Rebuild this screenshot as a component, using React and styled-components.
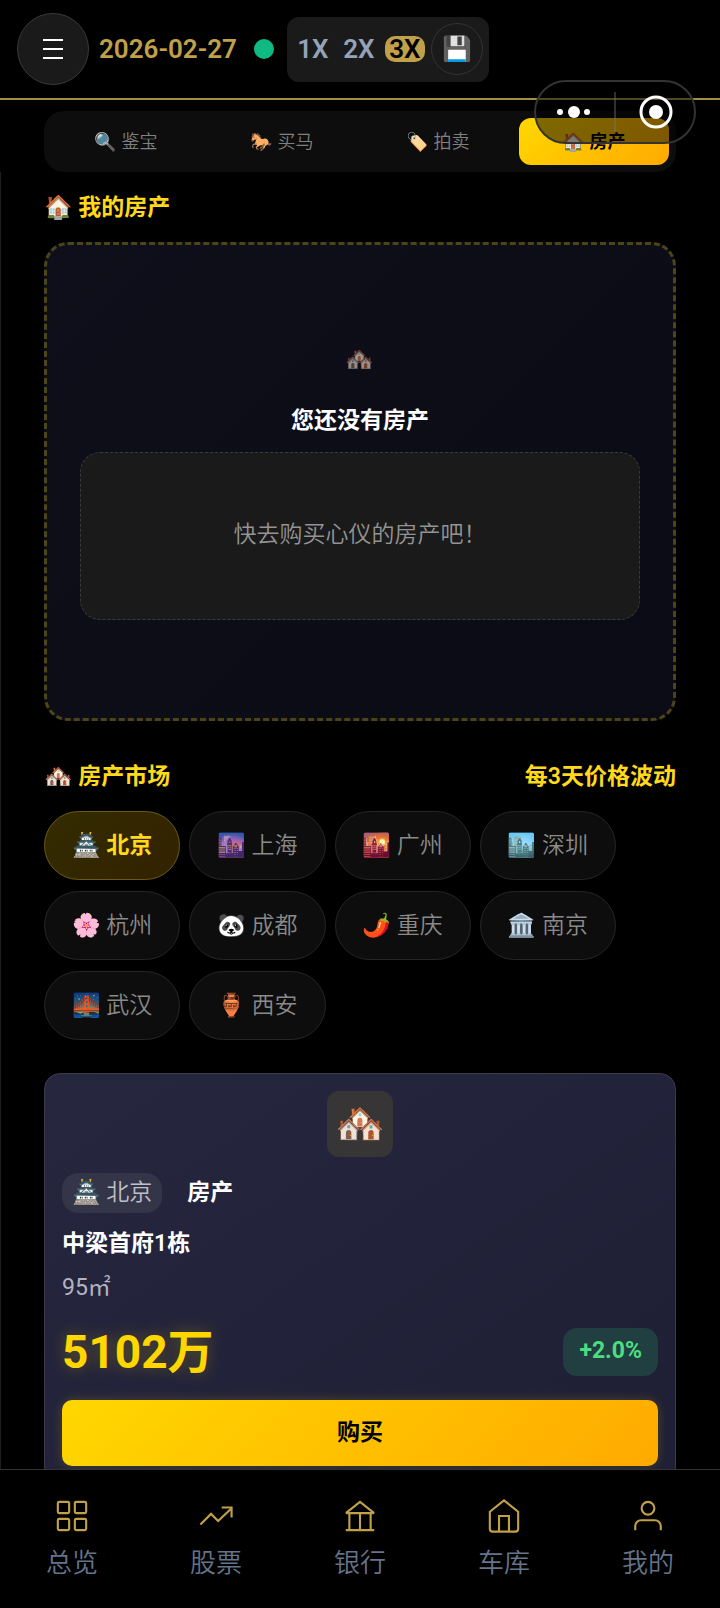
import styled, { createGlobalStyle, css } from "styled-components";
import { useState } from "react";

const GlobalStyle = createGlobalStyle`
  * {
    box-sizing: border-box;
  }

  body {
    margin: 0;
    background-color: #000;
    color: #fff;
    font-family: Roboto, "Noto Sans CJK SC", "Noto Color Emoji", sans-serif;
    font-size: 23px;
    font-weight: 350;
    line-height: 34px;
  }

  button {
    font-family: inherit;
    font-size: inherit;
    font-weight: inherit;
    line-height: inherit;
    color: inherit;
    padding: 0;
    border: none;
    background: none;
    cursor: pointer;
  }

  h2, h3, p {
    margin: 0;
    font-size: inherit;
  }
`;

const Container = styled.div`
  height: 100vh;
  display: flex;
  flex-direction: column;
  overflow: hidden;
`;

const Header = styled.header`
  flex: none;
  display: flex;
  align-items: center;
  height: 100px;
  padding: 0 17px;
  border-bottom: 2px solid #a39043;
`;

const MenuButton = styled.button`
  display: flex;
  align-items: center;
  justify-content: center;
  width: 72px;
  height: 72px;
  border: 1px solid #3a3a3a;
  border-radius: 50%;
  background-color: #1a1a1a;
`;

const DateText = styled.time`
  margin-left: 10px;
  color: #c0a048;
  font-size: 26px;
  font-weight: 600;
`;

const StatusDot = styled.span`
  width: 20px;
  height: 20px;
  margin: 0 13px 0 17px;
  border-radius: 50%;
  background-color: #10b981;
`;

const SpeedGroup = styled.div`
  display: flex;
  align-items: center;
  height: 65px;
  padding: 0 6px;
  border-radius: 12px;
  background-color: #1a1a1a;
`;

const SpeedButton = styled.button`
  margin-right: 6px;
  width: 40px;
  border-radius: 10px;
  color: ${(props) => (props.$active ? "#000" : "#94a3b8")};
  background-color: ${(props) => (props.$active ? "#c0a048" : "transparent")};
  font-size: 26px;
  font-weight: 600;
  line-height: 26px;
`;

const SaveButton = styled.button`
  width: 52px;
  height: 52px;
  border: 1px solid #333;
  border-radius: 50%;
  font-size: 24px;
`;

// floating pill of the host app, lies over the header and the tabs
const Capsule = styled.div`
  position: absolute;
  top: 80px;
  right: 24px;
  z-index: 5;
  display: flex;
  align-items: center;
  width: 162px;
  height: 64px;
  border: 2px solid #333;
  border-radius: 32px;
  background-color: rgba(0, 0, 0, 0.5);
`;

const CapsuleButton = styled.button`
  flex: 1;
  height: 40px;
  display: flex;
  align-items: center;
  justify-content: center;

  & + & {
    border-left: 2px solid rgba(120, 120, 120, 0.4);
  }
`;

const Main = styled.main`
  flex: 1;
  min-height: 0;
  overflow: hidden;
  padding-top: 11px;
`;

const Tabs = styled.nav`
  display: flex;
  gap: 6px;
  margin: 0 44px;
  padding: 7px;
  border-radius: 20px;
  background-color: #0d0d0d;
`;

const Panel = styled.div`
  padding: 19px 44px 0 43px;
  border-left: 1px solid #1f1f1f;
`;

const Tab = styled.button`
  flex: 1;
  height: 47px;
  border-radius: 12px;
  color: #808080;
  font-size: 18px;

  ${(props) =>
    props.$active &&
    css`
      color: #000;
      font-weight: 600;
      background: linear-gradient(135deg, #ffd700, #ffaa00);
    `}
`;

const SectionHeader = styled.div`
  display: flex;
  justify-content: space-between;
  color: #ffd91a;
  font-weight: 600;
`;

const SectionTitle = styled.h2`
  font-weight: 600;
`;

const EmptyBox = styled.section`
  display: flex;
  flex-direction: column;
  align-items: center;
  margin: 17px 0 39px;
  padding: 98px 33px;
  border: 3px dashed #4d4516;
  border-radius: 24px;
  background: linear-gradient(135deg, #0f0f1b, #0b0b15);
`;

const EmptyIcon = styled.span`
  opacity: 0.6;
`;

const EmptyTitle = styled.h3`
  margin-top: 27px;
  font-weight: 600;
`;

const EmptyHint = styled.p`
  align-self: stretch;
  margin-top: 14px;
  padding: 65px 20px 67px;
  border: 1px dashed #3a3a3a;
  border-radius: 20px;
  background-color: #1a1a1a;
  color: #949494;
  text-align: center;
`;

const CityList = styled.div`
  display: flex;
  flex-wrap: wrap;
  gap: 11px 9px;
  margin-top: 17px;
`;

const CityButton = styled.button`
  height: 69px;
  padding: 0 27px;
  border: 1px solid #262626;
  border-radius: 35px;
  background-color: #0d0d0d;
  color: #8a8a8a;

  ${(props) =>
    props.$active &&
    css`
      border-color: #6b5c14;
      background: linear-gradient(135deg, #332b00, #332200);
      color: #ffd91a;
      font-weight: 600;
    `}
`;

const Card = styled.article`
  margin-top: 33px;
  padding: 17px;
  border: 1px solid #3b3b4c;
  border-radius: 16px;
  background: linear-gradient(145deg, #26263f, #1e1e35);
`;

const CardImage = styled.div`
  display: flex;
  align-items: center;
  justify-content: center;
  width: 66px;
  height: 66px;
  margin: 0 auto;
  border-radius: 12px;
  background-color: #383536;
  font-size: 40px;
`;

const CardRow = styled.div`
  display: flex;
  align-items: center;
  margin-top: 16px;
`;

const CityTag = styled.span`
  padding: 3px 10px;
  border-radius: 16px;
  background-color: #353549;
  color: #c0c0c8;
`;

const Kind = styled.span`
  margin-left: 25px;
  font-weight: 600;
`;

const CardName = styled.h3`
  margin-top: 14px;
  font-weight: 600;
`;

const Area = styled.p`
  margin-top: 10px;
  color: #b4b4be;
  font-weight: 400;
`;

const PriceRow = styled.div`
  display: flex;
  align-items: center;
  justify-content: space-between;
  margin-top: 14px;
`;

const Price = styled.strong`
  color: #ffd700;
  font-size: 46px;
  font-weight: 700;
  line-height: 66px;
  text-shadow: 0 0 16px rgba(255, 215, 0, 0.3);
`;

const Change = styled.span`
  padding: 6px 16px 8px;
  border-radius: 14px;
  background-color: #213f40;
  color: #4ade80;
  font-weight: 700;
`;

const BuyButton = styled.button`
  width: 100%;
  height: 66px;
  margin-top: 15px;
  border-radius: 10px;
  background: linear-gradient(135deg, #ffd700, #ffaa00);
  box-shadow: 0 0 12px rgba(255, 215, 0, 0.2);
  color: #000;
  font-weight: 600;
`;

const BottomNav = styled.nav`
  flex: none;
  display: flex;
  height: 139px;
  border-top: 1px solid #333;
`;

const NavLink = styled.a`
  flex: 1;
  display: flex;
  flex-direction: column;
  align-items: center;
  padding-top: 29px;
  color: #64748b;
  font-size: 26px;
  text-decoration: none;

  svg {
    margin-bottom: 13px;
    color: #c0a048;
  }
`;

const tabs = ["🔍 鉴宝", "🐎 买马", "🏷️ 拍卖", "🏠 房产"];

const cities = [
  "🏯 北京",
  "🌆 上海",
  "🌇 广州",
  "🏙️ 深圳",
  "🌸 杭州",
  "🐼 成都",
  "🌶️ 重庆",
  "🏛️ 南京",
  "🌉 武汉",
  "🏺 西安",
];

const navItems = [
  {
    label: "总览",
    icon: (
      <>
        <rect x="2" y="2" width="8" height="8" rx="1" />
        <rect x="14" y="2" width="8" height="8" rx="1" />
        <rect x="2" y="14" width="8" height="8" rx="1" />
        <rect x="14" y="14" width="8" height="8" rx="1" />
      </>
    ),
  },
  {
    label: "股票",
    icon: (
      <>
        <path d="M1 18 8.5 10.5 13.5 15.5 23 6.5" />
        <path d="M16 6h7v7" />
      </>
    ),
  },
  {
    label: "银行",
    icon: <path d="M2 22h20M2 10h20M4.5 10v12M19.5 10v12M12 10v12M2 10l10-8 10 8" />,
  },
  {
    label: "车库",
    icon: (
      <>
        <path d="M2 9 12 1l10 8v12a2 2 0 0 1-2 2H4a2 2 0 0 1-2-2z" />
        <path d="M8.5 23V12h7v11" />
      </>
    ),
  },
  {
    label: "我的",
    icon: (
      <>
        <circle cx="12" cy="6.5" r="4.5" />
        <path d="M3 22v-3a4 4 0 0 1 4-4h10a4 4 0 0 1 4 4v3" />
      </>
    ),
  },
];

const App = () => {
  const [speed, setSpeed] = useState("3X");
  const [tab, setTab] = useState(tabs[3]);
  const [city, setCity] = useState(cities[0]);

  return (
    <Container>
      <GlobalStyle />
      <Header>
        <MenuButton aria-label="菜单">
          <svg width="20" height="20" stroke="#fff" strokeWidth="2">
            <path d="M0 1h20M0 10h20M0 19h20" />
          </svg>
        </MenuButton>
        <DateText>2026-02-27</DateText>
        <StatusDot />
        <SpeedGroup>
          {["1X", "2X", "3X"].map((item) => (
            <SpeedButton
              key={item}
              $active={item === speed}
              onClick={() => setSpeed(item)}
            >
              {item}
            </SpeedButton>
          ))}
          <SaveButton>💾</SaveButton>
        </SpeedGroup>
      </Header>
      <Capsule>
        <CapsuleButton aria-label="更多">
          <svg width="36" height="12" viewBox="0 0 36 12" fill="#fff">
            <circle cx="3" cy="6" r="3" />
            <circle cx="17" cy="6" r="6" />
            <circle cx="30" cy="6" r="3" />
          </svg>
        </CapsuleButton>
        <CapsuleButton aria-label="关闭">
          <svg width="36" height="34" fill="#fff">
            <circle cx="19" cy="17" r="15" fill="none" stroke="#fff" strokeWidth="3" />
            <circle cx="19" cy="17" r="7" />
          </svg>
        </CapsuleButton>
      </Capsule>
      <Main>
        <Tabs>
          {tabs.map((item) => (
            <Tab key={item} $active={item === tab} onClick={() => setTab(item)}>
              {item}
            </Tab>
          ))}
        </Tabs>
        <Panel>
          <SectionHeader>
            <SectionTitle>🏠 我的房产</SectionTitle>
          </SectionHeader>
          <EmptyBox>
            <EmptyIcon>🏘️</EmptyIcon>
            <EmptyTitle>您还没有房产</EmptyTitle>
            <EmptyHint>快去购买心仪的房产吧！</EmptyHint>
          </EmptyBox>
          <SectionHeader>
            <SectionTitle>🏘️ 房产市场</SectionTitle>
            <span>每3天价格波动</span>
          </SectionHeader>
          <CityList>
            {cities.map((item) => (
              <CityButton
                key={item}
                $active={item === city}
                onClick={() => setCity(item)}
              >
                {item}
              </CityButton>
            ))}
          </CityList>
          <Card>
            <CardImage>🏘️</CardImage>
            <CardRow>
              <CityTag>🏯 北京</CityTag>
              <Kind>房产</Kind>
            </CardRow>
            <CardName>中梁首府1栋</CardName>
            <Area>95㎡</Area>
            <PriceRow>
              <Price>5102万</Price>
              <Change>+2.0%</Change>
            </PriceRow>
            <BuyButton>购买</BuyButton>
          </Card>
        </Panel>
      </Main>
      <BottomNav>
        {navItems.map((item) => (
          <NavLink key={item.label} href="#">
            <svg
              width="34"
              height="34"
              viewBox="0 0 24 24"
              fill="none"
              stroke="currentColor"
              strokeWidth="1.5"
            >
              {item.icon}
            </svg>
            {item.label}
          </NavLink>
        ))}
      </BottomNav>
    </Container>
  );
};

export default App;
